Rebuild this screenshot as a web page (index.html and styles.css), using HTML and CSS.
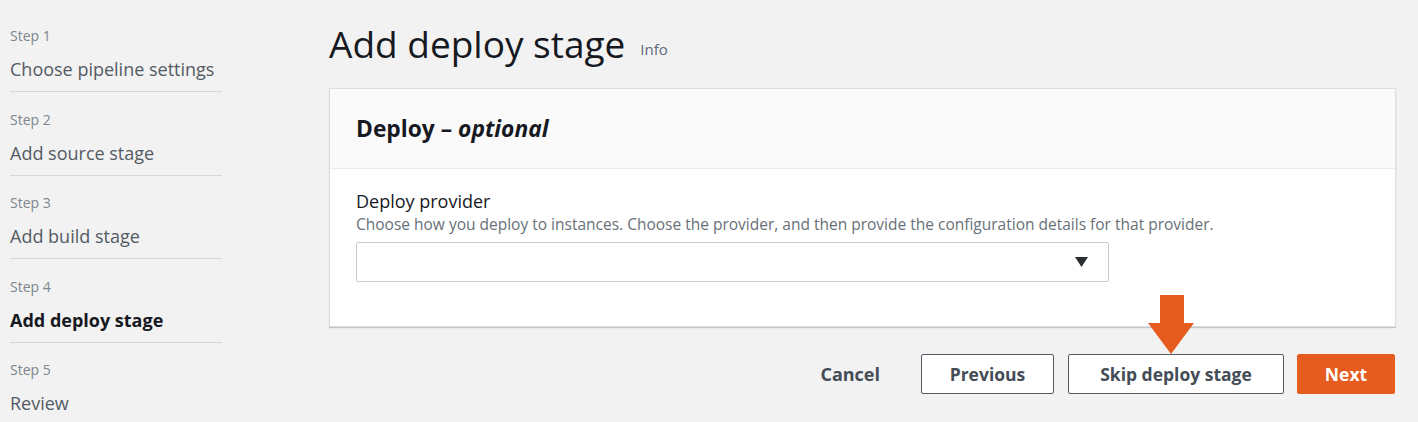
FILE: index.html
```html
<!DOCTYPE html>
<html>
<head>
<meta charset="utf-8">
<link rel="stylesheet" href="styles.css">
</head>
<body>
<div class="page">
  <nav class="nav">
    <div class="step">
      <div class="step-label">Step 1</div>
      <div class="step-title">Choose pipeline settings</div>
    </div>
    <div class="step">
      <div class="step-label">Step 2</div>
      <div class="step-title">Add source stage</div>
    </div>
    <div class="step">
      <div class="step-label">Step 3</div>
      <div class="step-title">Add build stage</div>
    </div>
    <div class="step">
      <div class="step-label">Step 4</div>
      <div class="step-title active">Add deploy stage</div>
    </div>
    <div class="step last">
      <div class="step-label">Step 5</div>
      <div class="step-title">Review</div>
    </div>
  </nav>
  <main class="main">
    <div class="heading-row">
      <h1 class="heading">Add deploy stage</h1>
      <span class="info">Info</span>
    </div>
    <section class="card">
      <div class="card-header">
        <h2 class="card-title">Deploy – <em>optional</em></h2>
      </div>
      <div class="card-body">
        <div class="field-label">Deploy provider</div>
        <div class="field-desc">Choose how you deploy to instances. Choose the provider, and then provide the configuration details for that provider.</div>
        <div class="select">
          <svg class="caret" width="13" height="10" viewBox="0 0 13 10"><polygon points="0,0 13,0 6.5,10" fill="#2a2e33"/></svg>
        </div>
      </div>
    </section>
    <div class="actions">
      <span class="link-btn">Cancel</span>
      <span class="btn btn-prev">Previous</span>
      <span class="btn btn-skip">Skip deploy stage
        <svg class="arrow" width="46" height="60" viewBox="0 0 46 60"><polygon points="12,0 36,0 36,28 46,28 23,59 0,28 12,28" fill="#e65c1f"/></svg>
      </span>
      <span class="btn primary">Next</span>
    </div>
  </main>
</div>
</body>
</html>
```
FILE: styles.css
```css
* { box-sizing: border-box; }
html, body { margin: 0; padding: 0; }
body {
  background: #f2f2f2;
  font-family: "Open Sans", "Noto Sans", sans-serif;
  color: #16191f;
  width: 1418px;
  height: 422px;
  overflow: hidden;
}
.page {
  display: grid;
  grid-template-columns: 212px 1fr;
  column-gap: 107px;
  padding-left: 10px;
  padding-right: 22px;
}
.nav {
  padding-top: 26px;
}
.step {
  border-bottom: 1px solid #d5d9dc;
  padding-bottom: 10px;
  margin-bottom: 17.5px;
}
.step.last { border-bottom: none; }
.step-label {
  font-size: 14px;
  line-height: 20px;
  color: #7d858d;
}
.step-title {
  margin-top: 11px;
  font-size: 18px;
  line-height: 24px;
  color: #545b64;
}
.step-title.active {
  color: #16191f;
  font-weight: 700;
}
.main {
  padding-top: 20px;
}
.heading-row {
  display: flex;
  align-items: flex-end;
  gap: 15px;
  height: 48px;
}
.heading {
  margin: 0;
  font-size: 37px;
  line-height: 48px;
  font-weight: 400;
  color: #16191f;
}
.info {
  font-size: 15px;
  line-height: 20px;
  padding-bottom: 9px;
  color: #5a6b7c;
}
.card {
  margin-top: 20px;
  background: #fff;
  border: 1px solid #dcdfe2;
  box-shadow: 0 1px 1px rgba(0,28,36,0.2);
}
.card-header {
  height: 80px;
  background: #fafafa;
  border-bottom: 1px solid #eaeded;
  display: flex;
  align-items: center;
  padding: 0 26px;
}
.card-title {
  margin: 0;
  font-size: 22.8px;
  font-weight: 700;
  color: #16191f;
}
.card-title em { font-style: italic; font-weight: 700; }
.card-body {
  padding: 20px 26px 44px;
}
.field-label {
  font-size: 18px;
  line-height: 24px;
  color: #16191f;
}
.field-desc {
  font-size: 15.5px;
  line-height: 22px;
  color: #687078;
}
.select {
  margin-top: 7px;
  width: 753px;
  height: 40px;
  border: 1px solid #c5ccd1;
  border-radius: 2px;
  background: #fff;
  display: flex;
  align-items: center;
  justify-content: flex-end;
  padding-right: 20px;
}
.actions {
  margin-top: 27px;
  margin-right: 1px;
  display: flex;
  justify-content: flex-end;
  align-items: center;
  gap: 13px;
}
.link-btn {
  font-size: 18px;
  font-weight: 700;
  color: #444c56;
  margin-right: 28px;
}
.btn {
  position: relative;
  height: 40px;
  display: flex;
  align-items: center;
  justify-content: center;
  border: 1px solid #545b64;
  border-radius: 2px;
  background: #fff;
  font-size: 17.5px;
  font-weight: 700;
  color: #444c56;
}
.btn-prev { width: 133px; }
.btn-skip { width: 216px; margin-left: 1px; }
.btn.primary {
  width: 98px;
  background: #e65c1f;
  border-color: #e65c1f;
  color: #fff;
}
.arrow {
  position: absolute;
  left: 79px;
  top: -60px;
}
```
